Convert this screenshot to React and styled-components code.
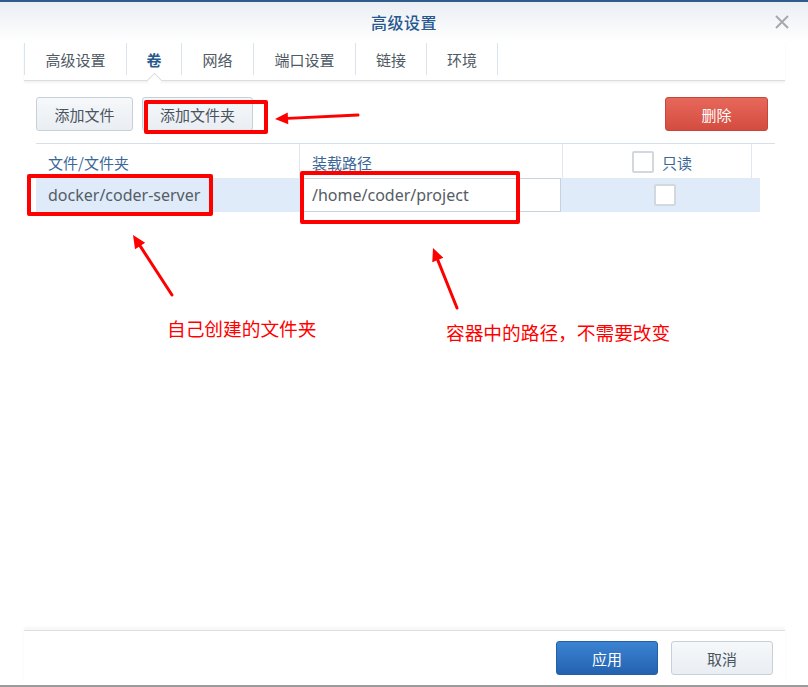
import React from "react";
import styled, { createGlobalStyle } from "styled-components";

const GlobalStyle = createGlobalStyle`
  html, body {
    margin: 0;
    padding: 0;
    background: #ffffff;
  }
  body {
    font-family: "Noto Sans CJK SC", "Noto Sans", sans-serif;
  }
  * {
    box-sizing: border-box;
  }
`;

const Window = styled.div`
  position: relative;
  width: 808px;
  height: 687px;
  display: flex;
  flex-direction: column;
  background: #ffffff;
  border-top: 2px solid #2e5b8a;
  border-bottom: 2px solid #9b9b9b;
  overflow: hidden;
`;

const Header = styled.div`
  height: 40px;
  display: grid;
  grid-template-columns: 1fr auto 1fr;
  align-items: center;
  background: linear-gradient(#eaeef3, #ffffff);
`;

const Title = styled.div`
  grid-column: 2;
  font-size: 16px;
  font-weight: 500;
  color: #285890;
  letter-spacing: 0.5px;
`;

const Close = styled.div`
  grid-column: 3;
  justify-self: end;
  margin-right: 18px;
  width: 16px;
  height: 16px;
  display: flex;
  align-items: center;
  justify-content: center;
`;

const TabBar = styled.div`
  position: relative;
  margin: 0 23px 0 24px;
  height: 39px;
  display: flex;
  align-items: flex-start;
  padding-top: 1px;
  border-bottom: 1px solid #dadee3;
  box-shadow: 0 2px 2px rgba(0, 0, 0, 0.05);
`;

const Tab = styled.div`
  position: relative;
  height: 32px;
  display: flex;
  align-items: center;
  padding: 0 ${(p) => p.$pad}px;
  border-left: 1px solid #dbe3ec;
  font-size: 15px;
  color: ${(p) => (p.$active ? "#2a5a8e" : "#505a64")};
  font-weight: ${(p) => (p.$active ? 700 : 400)};
  &:last-child {
    border-right: 1px solid #dbe3ec;
  }
  ${(p) =>
    p.$active &&
    `
    &::after {
      content: "";
      position: absolute;
      left: 50%;
      bottom: -11px;
      width: 10px;
      height: 10px;
      margin-left: -5px;
      background: #ffffff;
      border-left: 1px solid #dadee3;
      border-top: 1px solid #dadee3;
      transform: rotate(45deg);
    }
  `}
`;

const Body = styled.div`
  flex: 1;
  padding: 16px 33px 0 36px;
  display: flex;
  flex-direction: column;
`;

const Toolbar = styled.div`
  display: flex;
  align-items: center;
  gap: 9px;
  padding-right: 7px;
`;

const Button = styled.button`
  height: 34px;
  padding: 0;
  width: ${(p) => p.$w}px;
  font-family: "Noto Sans CJK SC", sans-serif;
  font-size: 15px;
  border-radius: 3px;
  cursor: pointer;
  color: ${(p) => (p.$kind === "light" ? "#4b545e" : "#ffffff")};
  border: 1px solid
    ${(p) =>
      p.$kind === "danger" ? "#c9453a" : p.$kind === "primary" ? "#2460a8" : "#c6d0db"};
  background: ${(p) =>
    p.$kind === "danger"
      ? "linear-gradient(#e6685b, #d44c40)"
      : p.$kind === "primary"
      ? "linear-gradient(#3b83d2, #2462b0)"
      : "linear-gradient(#f6f8fa, #e9eef3)"};
`;

const Spacer = styled.div`
  flex: 1;
`;

const Table = styled.div`
  margin-top: 12px;
  width: 739px;
`;

const HeadRow = styled.div`
  display: grid;
  grid-template-columns: 264px 263px 189px 23px;
  height: 35px;
  border-top: 1px solid #d6e0ea;
`;

const HeadCell = styled.div`
  display: flex;
  align-items: center;
  justify-content: ${(p) => (p.$center ? "center" : "flex-start")};
  gap: 8px;
  padding: ${(p) => (p.$center ? "2px 0 0 10px" : "2px 12px 0")};
  border-right: ${(p) => (p.$last ? "none" : "1px solid #dfe7ef")};
  font-size: 15px;
  color: #3a6797;
`;

const DataRow = styled.div`
  display: grid;
  grid-template-columns: 264px 261px 199px;
  height: 34px;
  background: #dfebf9;
  width: 724px;
`;

const Cell = styled.div`
  display: flex;
  align-items: center;
  justify-content: ${(p) => (p.$center ? "center" : "flex-start")};
  padding: ${(p) => (p.$center ? "0 0 0 8px" : "0 12px")};
  font-family: "Noto Sans", "Noto Sans CJK SC", sans-serif;
  font-size: 16px;
  color: #555d66;
`;

const PathInput = styled.div`
  margin-left: 1px;
  height: 34px;
  display: flex;
  align-items: center;
  padding: 0 10px;
  background: #ffffff;
  border: 1px solid #c9d2dc;
  font-family: "Noto Sans", sans-serif;
  font-size: 16px;
  color: #555d66;
`;

const Check = styled.span`
  display: inline-block;
  width: 22px;
  height: 22px;
  background: #ffffff;
  border: 2px solid #d3d8de;
  border-radius: 2px;
`;

const Footer = styled.div`
  margin: 0 23px 0 24px;
  height: 55px;
  border-top: 1px solid #dcdfe3;
  box-shadow: 0 -3px 3px rgba(0, 0, 0, 0.035);
  display: flex;
  justify-content: flex-end;
  align-items: flex-start;
  padding: 10px 12px 0 0;
  gap: 13px;
`;

const MarkBox = styled.div`
  position: absolute;
  border: 4px solid #ff0000;
  border-radius: 2px;
  pointer-events: none;
`;

const Note = styled.div`
  position: absolute;
  font-size: 18.7px;
  color: #ff0000;
  white-space: nowrap;
`;

const Overlay = styled.svg`
  position: absolute;
  left: 0;
  top: 0;
  pointer-events: none;
`;

function Arrow({ x1, y1, x2, y2 }) {
  const a = Math.atan2(y2 - y1, x2 - x1);
  const len = 13;
  const w = 6;
  const bx = x2 - len * Math.cos(a);
  const by = y2 - len * Math.sin(a);
  const px = -Math.sin(a) * w;
  const py = Math.cos(a) * w;
  return (
    <g>
      <line x1={x1} y1={y1} x2={bx} y2={by} stroke="#ff0000" strokeWidth="3" strokeLinecap="round" />
      <polygon points={`${x2},${y2} ${bx + px},${by + py} ${bx - px},${by - py}`} fill="#ff0000" />
    </g>
  );
}

const tabs = [
  { label: "高级设置", pad: 20.5 },
  { label: "卷", pad: 19.5, active: true },
  { label: "网络", pad: 20.5 },
  { label: "端口设置", pad: 20.5 },
  { label: "链接", pad: 20 },
  { label: "环境", pad: 20 },
];

export default function App() {
  return (
    <>
      <GlobalStyle />
      <Window>
        <Header>
          <Title>高级设置</Title>
          <Close>
            <svg width="16" height="16" viewBox="0 0 16 16">
              <path d="M2 2 L14 14 M14 2 L2 14" stroke="#a5a9ae" strokeWidth="2" />
            </svg>
          </Close>
        </Header>
        <TabBar>
          {tabs.map((t) => (
            <Tab key={t.label} $pad={t.pad} $active={t.active}>
              {t.label}
            </Tab>
          ))}
        </TabBar>
        <Body>
          <Toolbar>
            <Button $kind="light" $w={97}>添加文件</Button>
            <Button $kind="light" $w={111}>添加文件夹</Button>
            <Spacer />
            <Button $kind="danger" $w={103}>删除</Button>
          </Toolbar>
          <Table>
            <HeadRow>
              <HeadCell>文件/文件夹</HeadCell>
              <HeadCell>装载路径</HeadCell>
              <HeadCell $center>
                <Check />
                只读
              </HeadCell>
              <HeadCell $last />
            </HeadRow>
            <DataRow>
              <Cell>docker/coder-server</Cell>
              <PathInput>/home/coder/project</PathInput>
              <Cell $center>
                <Check />
              </Cell>
            </DataRow>
          </Table>
        </Body>
        <Footer>
          <Button $kind="primary" $w={102}>应用</Button>
          <Button $kind="light" $w={102}>取消</Button>
        </Footer>

        <MarkBox style={{ left: 144, top: 98, width: 124, height: 34 }} />
        <MarkBox style={{ left: 27, top: 172, width: 186, height: 42 }} />
        <MarkBox style={{ left: 300, top: 169, width: 220, height: 53 }} />
        <Overlay width="808" height="687">
          <Arrow x1={358} y1={113} x2={275} y2={117} />
          <Arrow x1={172} y1={293} x2={133} y2={233} />
          <Arrow x1={457} y1={306} x2={433} y2={246} />
        </Overlay>
        <Note style={{ left: 167, top: 312 }}>自己创建的文件夹</Note>
        <Note style={{ left: 446, top: 316 }}>容器中的路径，不需要改变</Note>
      </Window>
    </>
  );
}
